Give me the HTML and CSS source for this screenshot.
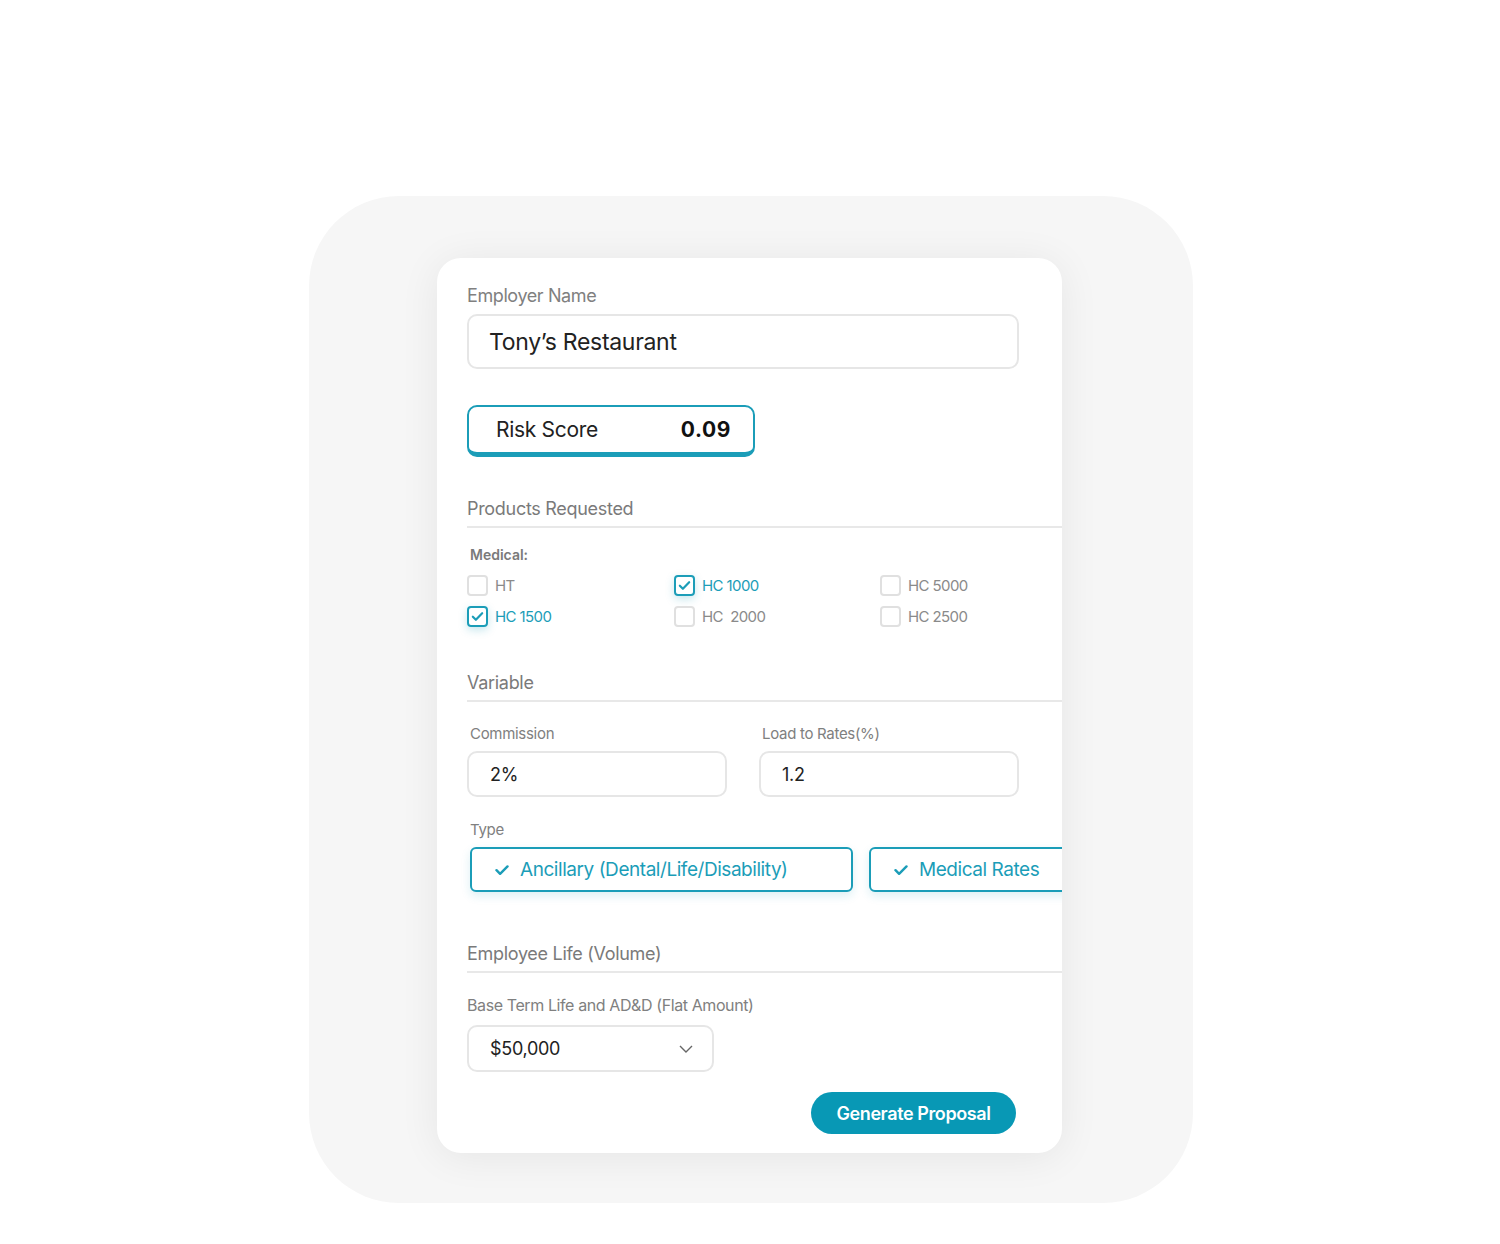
FILE: index.html
```html
<!DOCTYPE html>
<html lang="en">
<head>
<meta charset="utf-8">
<title>Proposal</title>
<link rel="stylesheet" href="styles.css">
</head>
<body>
<div class="page">
  <div class="backdrop">
    <div class="card">
      <div class="field-label first">Employer Name</div>
      <div class="text-input big">Tony’s Restaurant</div>

      <div class="risk">
        <span class="risk-label">Risk Score</span>
        <span class="risk-value">0.09</span>
      </div>

      <div class="section">Products Requested</div>
      <div class="divider"></div>

      <div class="sub-label">Medical:</div>
      <div class="check-grid">
        <label class="check"><span class="box"></span><span>HT</span></label>
        <label class="check on"><span class="box"><svg viewBox="0 0 20 20"><path d="M4.5 10.2l3.6 3.6L15.5 6.2"/></svg></span><span>HC 1000</span></label>
        <label class="check"><span class="box"></span><span>HC 5000</span></label>
        <label class="check on"><span class="box"><svg viewBox="0 0 20 20"><path d="M4.5 10.2l3.6 3.6L15.5 6.2"/></svg></span><span>HC 1500</span></label>
        <label class="check"><span class="box"></span><span>HC&nbsp; 2000</span></label>
        <label class="check"><span class="box"></span><span>HC 2500</span></label>
      </div>

      <div class="section s2">Variable</div>
      <div class="divider"></div>

      <div class="pair">
        <div class="col">
          <div class="small-label">Commission</div>
          <div class="text-input mid">2%</div>
        </div>
        <div class="col">
          <div class="small-label">Load to Rates(%)</div>
          <div class="text-input mid">1.2</div>
        </div>
      </div>

      <div class="small-label type-label">Type</div>
      <div class="type-row">
        <div class="type-btn wide"><svg viewBox="0 0 14 12"><path d="M1.5 6.2l3.6 3.6L12.5 2.4"/></svg>Ancillary (Dental/Life/Disability)</div>
        <div class="type-btn"><svg viewBox="0 0 14 12"><path d="M1.5 6.2l3.6 3.6L12.5 2.4"/></svg>Medical Rates</div>
      </div>

      <div class="section s3">Employee Life (Volume)</div>
      <div class="divider"></div>

      <div class="field-label base">Base Term Life and AD&amp;D (Flat Amount)</div>
      <div class="select">
        <span>$50,000</span>
        <svg viewBox="0 0 14 8"><path d="M1 1l6 6 6-6"/></svg>
      </div>

      <div class="actions">
        <button class="primary">Generate Proposal</button>
      </div>
    </div>
  </div>
</div>
</body>
</html>
```

FILE: styles.css
```css
* { box-sizing: border-box; }

html, body {
  margin: 0;
  padding: 0;
  background: #ffffff;
  font-family: Inter, "Noto Sans", "Liberation Sans", sans-serif;
  color: #222;
}

.page {
  padding-top: 196px;
  padding-left: 309px;
  height: 1244px;
}

.backdrop {
  width: 884px;
  height: 1007px;
  border-radius: 90px;
  background: #f6f6f6;
  padding: 62px 131px 50px 128px;
}

.card {
  width: 625px;
  height: 895px;
  background: #fff;
  border-radius: 24px;
  box-shadow: 0 4px 40px rgba(0, 0, 0, 0.07);
  padding: 27px 0 0 30px;
  overflow: hidden;
}

.field-label {
  font-size: 18px;
  line-height: 22px;
  color: #808080;
  letter-spacing: -0.4px;
}

.text-input {
  border: 2px solid #e6e6e6;
  border-radius: 10px;
  display: flex;
  align-items: center;
  color: #222;
  letter-spacing: -0.3px;
}

.text-input.big {
  margin-top: 7px;
  width: 552px;
  height: 55px;
  padding-left: 20px;
  font-size: 23px;
}

.risk {
  margin-top: 36px;
  width: 288px;
  height: 52px;
  border: 2px solid #1b9db8;
  border-bottom-width: 5px;
  border-radius: 10px;
  display: flex;
  align-items: center;
  justify-content: space-between;
  padding: 0 22px 0 27px;
  font-size: 21px;
  letter-spacing: -0.3px;
}

.risk-label { color: #222; }
.risk-value { font-weight: 700; color: #111; letter-spacing: 0.6px; font-size: 21px; }

.section {
  margin-top: 41px;
  font-size: 18px;
  line-height: 22px;
  color: #7a7a7a;
  letter-spacing: -0.3px;
}

.section.s2 { margin-top: 46px; }
.section.s3 { margin-top: 51px; }

.divider {
  margin-top: 6px;
  width: 640px;
  height: 2px;
  background: #e8e8e8;
}

.sub-label {
  margin-top: 18px;
  margin-left: 3px;
  font-size: 14px;
  line-height: 18px;
  font-weight: 600;
  color: #7a7a7a;
}

.check-grid {
  margin-top: 11px;
  display: grid;
  grid-template-columns: 207px 206px 120px;
  row-gap: 11px;
}

.check {
  display: flex;
  align-items: center;
  gap: 7px;
  height: 20px;
  font-size: 15px;
  color: #8a8a8a;
  letter-spacing: -0.6px;
}

.check .box {
  width: 21px;
  height: 21px;
  border: 2px solid #e0e0e0;
  border-radius: 4px;
  display: flex;
  align-items: center;
  justify-content: center;
  flex: none;
}

.check.on { color: #1b9db8; }

.check.on .box {
  border-color: #1b9db8;
  box-shadow: 0 3px 8px rgba(27, 157, 184, 0.25);
}

.check .box svg {
  width: 19px;
  height: 19px;
  fill: none;
  stroke: #1b9db8;
  stroke-width: 2.6;
  stroke-linecap: round;
  stroke-linejoin: round;
}

.pair {
  margin-top: 23px;
  display: flex;
  gap: 32px;
}

.col { width: 260px; }

.small-label {
  margin-left: 3px;
  font-size: 15px;
  line-height: 18px;
  color: #808080;
  letter-spacing: -0.3px;
}

.text-input.mid {
  margin-top: 8px;
  width: 260px;
  height: 46px;
  padding-left: 21px;
  font-size: 18px;
}

.type-label { margin-top: 24px; }

.type-row {
  margin-top: 8px;
  margin-left: 3px;
  display: flex;
  gap: 16px;
}

.type-btn {
  flex: none;
  height: 45px;
  border: 2px solid #1b9db8;
  border-radius: 6px;
  display: flex;
  align-items: center;
  gap: 11px;
  padding-left: 23px;
  padding-right: 40px;
  font-size: 19px;
  color: #1b9db8;
  letter-spacing: -0.45px;
  box-shadow: 0 4px 10px rgba(27, 157, 184, 0.15);
  background: #fff;
}

.type-btn.wide { width: 383px; }

.type-btn svg {
  width: 14px;
  height: 12px;
  fill: none;
  stroke: #1b9db8;
  stroke-width: 2.4;
  stroke-linecap: round;
  stroke-linejoin: round;
}

.field-label.base {
  margin-top: 22px;
  font-size: 16px;
  line-height: 20px;
}

.select {
  margin-top: 10px;
  width: 247px;
  height: 47px;
  border: 2px solid #e6e6e6;
  border-radius: 10px;
  display: flex;
  align-items: center;
  justify-content: space-between;
  padding: 0 19px 0 21px;
  font-size: 18px;
  color: #222;
  letter-spacing: -0.3px;
}

.select svg {
  width: 14px;
  height: 8px;
  fill: none;
  stroke: #666;
  stroke-width: 1.4;
}

.actions {
  margin-top: 20px;
  width: 549px;
  display: flex;
  justify-content: flex-end;
}

.primary {
  width: 205px;
  height: 42px;
  border: none;
  border-radius: 21px;
  background: #0898b5;
  color: #fff;
  font-family: inherit;
  font-size: 18px;
  font-weight: 600;
  letter-spacing: -0.4px;
}
```
